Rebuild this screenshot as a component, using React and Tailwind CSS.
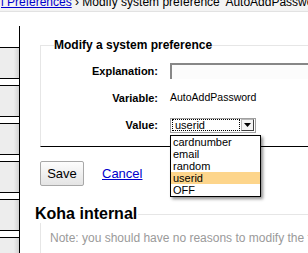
export default function App() {
  const options = ['cardnumber', 'email', 'random', 'userid', 'OFF']

  return (
    <div className="w-[308px] h-[253px] overflow-hidden bg-white font-['Liberation_Sans',Arial,sans-serif] text-black">
      <div className="h-[12px] bg-[#f3f3f3] border-b border-[#e2e2e2] overflow-hidden whitespace-nowrap">
        <div className="mt-[-5px] pl-[1px] text-[12px] leading-[14px]">
          <a href="#" className="text-[#0000cc] underline">l Preferences</a>
          <span> › Modify system preference 'AutoAddPassword'</span>
        </div>
      </div>

      <div className="flex">
        <div className="w-[20px] mt-[14px] h-[230px] border-r border-black shrink-0 pt-[21px] flex flex-col gap-[6px]">
          {[0, 1, 2, 3, 4, 5].map(i => (
            <div key={i} className="h-[32px] border-y border-black bg-[linear-gradient(to_right,#ededed_72%,#d2d2d2)] shrink-0" />
          ))}
        </div>

        <div className="flex-1 pl-[20px] pt-[26px]">
          <fieldset className="border-t border-l border-b border-t-[#e6e6e6] border-l-[#e6e6e6] border-b-black pb-[13px]">
            <legend className="ml-[13px] text-[12px] font-bold leading-[14px]">Modify a system preference</legend>

            <div className="mt-[11px] flex flex-col gap-[11px] text-[11px]">
              <div className="flex items-center h-[16px]">
                <div className="w-[117px] text-right font-bold">Explanation:</div>
                <div className="ml-[12px] flex-1 h-[16px] border-t-2 border-l-2 border-[#878787] bg-[#fcfcfc]" />
              </div>

              <div className="flex items-center h-[16px]">
                <div className="w-[117px] text-right font-bold">Variable:</div>
                <div className="ml-[12px] text-[10.5px]">AutoAddPassword</div>
              </div>

              <div className="flex items-center h-[16px]">
                <div className="w-[117px] text-right font-bold">Value:</div>
                <div className="ml-[12px] relative">
                  <div className="w-[86px] h-[15px] border border-[#a0a0a0] bg-white flex items-center p-[1px] gap-[1px]">
                    <div className="flex-1 h-[12px] border border-dotted border-black leading-[10px] pl-[2px] text-[11px]">userid</div>
                    <div className="w-[13px] h-[12px] border border-[#b8b8b8] border-r-[#404040] border-b-[#404040] bg-[#f4f4f4] flex items-center justify-center">
                      <svg width="7" height="4" viewBox="0 0 7 4"><path d="M0 0h7L3.5 4z" fill="#000" /></svg>
                    </div>
                  </div>
                  <div className="absolute left-0 top-[17px] w-[91px] border border-black bg-white shadow-[2px_2px_3px_rgba(0,0,0,0.45)] z-10">
                    {options.map(o => (
                      <div key={o} className={`h-[12px] leading-[12px] pl-[2px] text-[11px] ${o === 'userid' ? 'bg-[#fdd58b]' : ''}`}>{o}</div>
                    ))}
                  </div>
                </div>
              </div>
            </div>
          </fieldset>

          <div className="flex items-center mt-[14px]">
            <button className="w-[44px] h-[25px] border border-[#a8a8a8] rounded-[2px] bg-[linear-gradient(#fdfdfd,#e4e4e4)] text-[13px]">Save</button>
            <a href="#" className="ml-[18px] text-[13px] text-[#0000cc] underline">Cancel</a>
          </div>

          <fieldset className="mt-[19px] border-t border-l border-[#e6e6e6] h-[60px]">
            <legend className="ml-[-6px] text-[16px] font-bold leading-[18px] pr-[1px]">Koha internal</legend>
            <div className="pl-[9px] pt-[6px] text-[12px] text-[#9a9a9a] whitespace-nowrap">Note: you should have no reasons to modify the following default settings</div>
          </fieldset>
        </div>
      </div>
    </div>
  )
}
